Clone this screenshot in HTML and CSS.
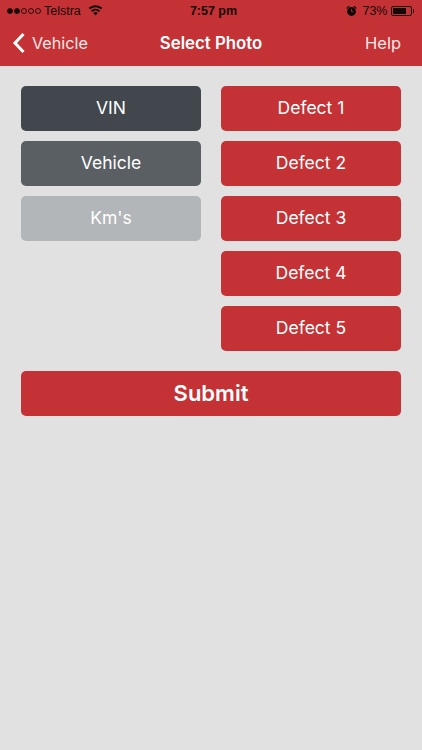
FILE: index.html
```html
<!DOCTYPE html>
<html lang="en">
<head>
<meta charset="utf-8">
<title>Select Photo</title>
<link rel="stylesheet" href="styles.css">
</head>
<body>
<div class="phone">
  <header class="header">
    <div class="status">
      <div class="status-left">
        <span class="dots"><i class="dot on"></i><i class="dot on"></i><i class="dot"></i><i class="dot"></i><i class="dot"></i></span>
        <span class="carrier">Telstra</span>
        <svg class="wifi" width="15" height="11" viewBox="0 0 15 11"><path d="M7.5 10.6 5.3 8a3.3 3.3 0 0 1 4.4 0zM4.3 6.9 3 5.4a6.9 6.9 0 0 1 9 0l-1.3 1.5a5 5 0 0 0-6.4 0zM2 4.3.6 2.8a10.6 10.6 0 0 1 13.8 0L13 4.3a8.6 8.6 0 0 0-11 0z" fill="#0c0606"/></svg>
      </div>
      <div class="status-time">7:57 pm</div>
      <div class="status-right">
        <svg class="alarm" width="11" height="12" viewBox="0 0 11 12"><circle cx="5.5" cy="6.5" r="4.4" fill="#0c0606"/><path d="M.4 3 2.600.8 3.600 1.600 1.200 3.900zM10.600 3 8.400.8 7.400 1.600 9.800 3.900z" fill="#0c0606"/><path d="M5.500 4v2.700h2" fill="none" stroke="#c43235" stroke-width=".8"/></svg>
        <span class="pct">73%</span>
        <span class="battery"><span class="battery-fill"></span></span><span class="battery-tip"></span>
      </div>
    </div>
    <nav class="nav">
      <a class="back">
        <svg class="chev" width="14" height="22" viewBox="0 0 14 22"><path d="M11.500 2 3 11l8.500 9" fill="none" stroke="#fff" stroke-width="3"/></svg>
        <span>Vehicle</span>
      </a>
      <div class="title">Select Photo</div>
      <a class="help">Help</a>
    </nav>
  </header>
  <main class="content">
    <div class="columns">
      <div class="col">
        <button class="btn vin">VIN</button>
        <button class="btn vehicle">Vehicle</button>
        <button class="btn kms">Km's</button>
      </div>
      <div class="col">
        <button class="btn red">Defect 1</button>
        <button class="btn red">Defect 2</button>
        <button class="btn red">Defect 3</button>
        <button class="btn red">Defect 4</button>
        <button class="btn red">Defect 5</button>
      </div>
    </div>
    <button class="btn red submit">Submit</button>
  </main>
</div>
</body>
</html>
```
FILE: styles.css
```css
* { box-sizing: border-box; }
html, body { margin: 0; padding: 0; }
body { font-family: Inter, "Liberation Sans", sans-serif; background: #e1e1e1; }
.phone { width: 422px; height: 750px; overflow: hidden; display: flex; flex-direction: column; }
.header { background: #c43235; height: 66px; flex: none; }
.status { height: 21px; display: grid; grid-template-columns: 1fr auto 1fr; align-items: center; padding: 0 7px; font-family: "Liberation Sans", sans-serif; font-size: 12.5px; color: #170808; }
.status-left { display: flex; align-items: center; gap: 3px; }
.dots { display: flex; gap: 1px; }
.dot { width: 6px; height: 6px; border-radius: 50%; border: 0.7px solid #2a0d0d; }
.dot.on { background: #170808; }
.carrier { margin-right: 4px; }
.wifi { display: block; }
.status-time { font-weight: 700; font-size: 12.5px; padding-left: 5px; }
.status-right { display: flex; align-items: center; justify-content: flex-end; }
.alarm { margin-right: 5px; display: block; }
.pct { margin-right: 3px; }
.battery { width: 21px; height: 10px; border: 1px solid #170808; border-radius: 2px; padding: 1px; display: block; margin-right: 1px; }
.battery-fill { display: block; width: 80%; height: 100%; background: #170808; }
.battery-tip { width: 1.5px; height: 4px; background: #170808; margin-right: 1px; }
.nav { height: 45px; display: grid; grid-template-columns: 1fr auto 1fr; align-items: center; color: #fff; font-size: 16.5px; padding: 0 21px 2px; }
.back { display: flex; align-items: center; gap: 6px; font-size: 16.2px; color: #f9e8e8; margin-left: -9px; }
.chev { display: block; }
.title { font-weight: 600; font-size: 16.8px; }
.help { justify-self: end; color: #f9e8e8; }
.content { padding: 20px 21px 0; display: flex; flex-direction: column; gap: 20px; }
.columns { display: grid; grid-template-columns: 1fr 1fr; column-gap: 20px; }
.col { display: flex; flex-direction: column; gap: 10px; }
.btn { display: block; width: 100%; height: 45px; border: 0; border-radius: 5px; padding: 0 0 2px; color: #fff; font-family: Inter, "Liberation Sans", sans-serif; font-size: 17.5px; text-align: center; }
.vin { background: #41474c; }
.vehicle { background: #5a5f63; }
.kms { background: #b3b6b8; }
.red { background: #c43235; }
.submit { font-size: 22px; font-weight: 600; }
```
